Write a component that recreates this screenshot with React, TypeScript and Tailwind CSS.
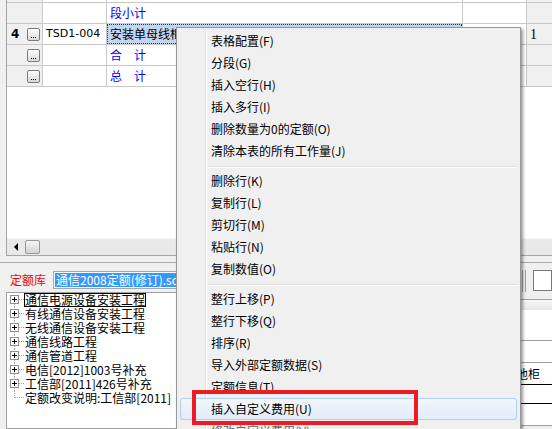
import React from "react";

type MenuItem = { label: string; active?: boolean; disabled?: boolean };

const menuGroups: MenuItem[][] = [
  [
    { label: "表格配置(F)" },
    { label: "分段(G)" },
    { label: "插入空行(H)" },
    { label: "插入多行(I)" },
    { label: "删除数量为0的定额(O)" },
    { label: "清除本表的所有工作量(J)" },
  ],
  [
    { label: "删除行(K)" },
    { label: "复制行(L)" },
    { label: "剪切行(M)" },
    { label: "粘贴行(N)" },
    { label: "复制数值(O)" },
  ],
  [
    { label: "整行上移(P)" },
    { label: "整行下移(Q)" },
    { label: "排序(R)" },
    { label: "导入外部定额数据(S)" },
    { label: "定额信息(T)" },
    { label: "插入自定义费用(U)", active: true },
    { label: "修改自定义费用(V)", disabled: true },
  ],
];

const treeItems = [
  "通信电源设备安装工程",
  "有线通信设备安装工程",
  "无线通信设备安装工程",
  "通信线路工程",
  "通信管道工程",
  "电信[2012]1003号补充",
  "工信部[2011]426号补充",
  "定额改变说明:工信部[2011]",
];

function DotButton() {
  return (
    <div className="flex h-[13px] w-[13px] items-end justify-center gap-[1px] rounded-[2px] border border-[#7b7b7b] bg-linear-to-b from-white to-[#d9d9d9] pb-[2px]">
      <span className="h-[1px] w-[1px] bg-black" />
      <span className="h-[1px] w-[1px] bg-black" />
      <span className="h-[1px] w-[1px] bg-black" />
    </div>
  );
}

type RowProps = {
  num?: string;
  button?: boolean;
  code?: string;
  name?: string;
  blue?: boolean;
  selected?: boolean;
  qty?: string;
  thin?: boolean;
};

function GridRow({ num, button, code, name, blue, selected, qty, thin }: RowProps) {
  return (
    <div className={`flex border-b border-[#c8c8c8] ${thin ? "h-[3px]" : "h-[21px]"}`}>
      <div className="flex w-[36px] items-center border-r border-[#c8c8c8] bg-[#f0f0f0] pl-[4px]">
        <span className="w-[16px] text-[12px] font-bold [font-family:'DejaVu_Sans',sans-serif]">{num}</span>
        {button && <DotButton />}
      </div>
      <div className="flex w-[64px] items-center border-r border-[#c8c8c8] pl-[3px] text-[11px] [font-family:'DejaVu_Sans',sans-serif]">
        {code}
      </div>
      <div className="flex w-[356px] border-r border-[#c8c8c8]">
        {selected ? (
          <div className="flex flex-1 items-center border border-dotted border-[#303030] bg-[#c3d6f0] pl-[2px] text-[12px]">
            {name}
          </div>
        ) : (
          <div className={`flex flex-1 items-center pl-[3px] text-[12px] ${blue ? "text-[#0000ff]" : "text-black"}`}>
            {name}
          </div>
        )}
      </div>
      <div className="w-[64px] border-r border-[#c8c8c8]" />
      <div className="flex flex-1 items-center bg-[#f0f0f0] pl-[3px] text-[14px] [font-family:'Liberation_Serif',serif]">
        {qty}
      </div>
    </div>
  );
}

function TreeBranch({ index, total }: { index: number; total: number }) {
  const last = index === total - 1;
  const first = index === 0;
  return (
    <svg width="14" height="14" viewBox="0 0 14 14" className="shrink-0">
      {last ? (
        <>
          <line x1="4.5" y1="0" x2="4.5" y2="7" stroke="#a0a0a0" strokeDasharray="1 1" />
          <line x1="5" y1="6.5" x2="14" y2="6.5" stroke="#a0a0a0" strokeDasharray="1 1" />
        </>
      ) : (
        <>
          {!first && <line x1="4.5" y1="0" x2="4.5" y2="2" stroke="#a0a0a0" strokeDasharray="1 1" />}
          <line x1="4.5" y1="11" x2="4.5" y2="14" stroke="#a0a0a0" strokeDasharray="1 1" />
          <line x1="9" y1="6.5" x2="14" y2="6.5" stroke="#a0a0a0" strokeDasharray="1 1" />
          <rect x="0.5" y="2.5" width="8" height="8" fill="#fff" stroke="#919191" />
          <line x1="2" y1="6.5" x2="7" y2="6.5" stroke="#000" />
          <line x1="4.5" y1="4" x2="4.5" y2="9" stroke="#000" />
        </>
      )}
    </svg>
  );
}

export default function App() {
  return (
    <div className="relative flex h-[429px] w-[552px] flex-col overflow-hidden bg-[#f0f0f0] text-black [font-family:'Noto_Sans_CJK_SC',sans-serif]">
      {/* upper grid */}
      <div className="ml-[6px] flex h-[256px] flex-col border-b border-l border-[#a5a5a5] bg-white">
        <div className="flex-1">
          <GridRow thin />
          <GridRow name="段小计" blue />
          <GridRow num="4" button code="TSD1-004" name="安装单母线柜" selected qty="1" />
          <GridRow button name="合　计" blue />
          <GridRow button name="总　计" blue />
        </div>
        <div className="flex h-[17px] items-center border-t border-[#f7f7f7] bg-[#e9e9e9]">
          <div className="flex w-[18px] justify-center">
            <div className="h-0 w-0 border-y-[4px] border-r-[4px] border-y-transparent border-r-black" />
          </div>
          <div className="h-[14px] w-[15px] rounded-[2px] border border-[#979797] bg-linear-to-b from-[#f5f5f5] to-[#d4d4d4]" />
        </div>
      </div>
      <div className="h-[6px]" />

      {/* lower panes */}
      <div className="flex flex-1 border-t border-[#a9a9a9]">
        <div className="flex w-[521px] flex-col">
          <div className="flex h-[29px] items-center pl-[10px] pt-[8px] pb-[3px]">
            <span className="w-[36px] text-[12px] text-[#ff0000]">定额库</span>
            <div className="ml-[7px] flex h-[18px] w-[460px] items-center border border-[#a7a7a7] bg-white pl-[1px]">
              <span className="bg-[#3399ff] px-[1px] text-[12px] leading-[14px] text-white">通信2008定额(修订).sqd</span>
            </div>
          </div>
          <div className="ml-[6px] flex-1 border border-[#a0a0a0] bg-white pl-[3px]">
            {treeItems.map((item, i) => (
              <div key={item} className="flex h-[14px] items-center">
                <TreeBranch index={i} total={treeItems.length} />
                <span
                  className={`whitespace-nowrap border px-0 text-[12px] leading-[12px] ${
                    i === 0 ? "border-black" : "border-transparent"
                  }`}
                >
                  {item}
                </span>
              </div>
            ))}
          </div>
        </div>
        <div className="flex flex-1 flex-col overflow-hidden">
          <div className="flex h-[29px] items-center pt-[6px]">
            <div className="ml-[1px] h-[22px] w-[4px] border-x border-[#a0a0a0]" />
            <div className="ml-[7px] h-[21px] flex-1 border border-[#7a7a7a] bg-white" />
          </div>
          <div className="h-[7px]" />
          <div className="border-t border-[#a0a0a0] bg-white">
            <div className="h-[10px] bg-linear-to-b from-[#f7f7f7] to-[#e6e6e6]" />
            <div className="h-[31px] border-b border-[#a0a0a0]" />
            <div className="h-[22px] border-b border-[#a0a0a0]" />
            <div className="flex h-[22px] items-center border-b border-black">
              <span className="-ml-[17px] whitespace-nowrap text-[12px]">电池柜</span>
            </div>
            <div className="h-[19px] border-b border-black" />
            <div className="h-[22px] border-b border-[#a0a0a0]" />
          </div>
        </div>
      </div>

      {/* context menu */}
      <div className="absolute left-[176px] top-[27px] w-[345px] border border-[#979797] bg-[#f0f0f0] px-[3px] pt-[2px] pb-[2px] shadow-[2px_2px_3px_rgba(0,0,0,0.4)]">
        {menuGroups.map((group, gi) => (
          <div key={gi}>
            {gi > 0 && (
              <div className="flex h-[8px]">
                <div className="w-[26px] border-r border-[#e2e3e3]" />
                <div className="flex-1 border-l border-white pt-[4px]">
                  <div className="border-y border-t-[#e0e0e0] border-b-white" />
                </div>
              </div>
            )}
            {group.map((item) =>
              item.active ? (
                <div
                  key={item.label}
                  className="flex h-[22px] items-center rounded-[3px] border border-[#aecff7] bg-linear-to-b from-[#f2f7fd] to-[#e3ecf9] pl-[30px] text-[12px]"
                >
                  {item.label}
                </div>
              ) : (
                <div key={item.label} className="flex h-[22px]">
                  <div className="w-[26px] border-r border-[#e2e3e3]" />
                  <div
                    className={`flex flex-1 items-center border-l border-white pl-[4px] text-[12px] ${
                      item.disabled ? "text-[#6d6d6d]" : "text-black"
                    }`}
                  >
                    {item.label}
                  </div>
                </div>
              )
            )}
          </div>
        ))}
      </div>

      {/* annotation */}
      <div className="absolute left-[192px] top-[390px] h-[35px] w-[226px] border-[4px] border-[#ec1c24]" />
    </div>
  );
}
